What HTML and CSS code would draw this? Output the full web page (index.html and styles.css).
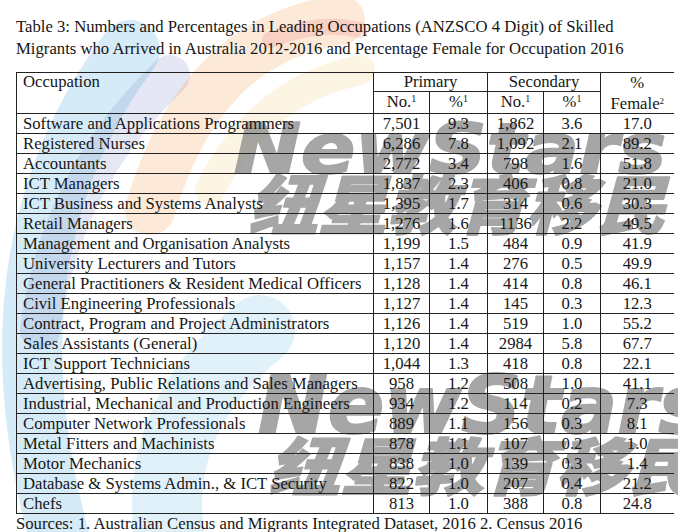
FILE: index.html
```html
<!DOCTYPE html>
<html>
<head>
<meta charset="utf-8">
<link rel="stylesheet" href="styles.css">
</head>
<body>
<div class="page">
  <svg class="backdrop" width="678" height="532" viewBox="0 0 678 532" aria-hidden="true">
    <g class="swirls" fill="none" stroke-linecap="round">
      <path class="sw-blue" d="M 130 50 Q -20 250 60 540"/>
      <path class="sw-lav" d="M 170 75 Q 60 180 40 330"/>
      <path class="sw-blue2" d="M 260 330 Q 150 420 170 540"/>
      <path class="sw-orange" d="M 150 210 Q 200 40 340 20"/>
      <path class="sw-yellow" d="M 210 190 Q 260 90 360 70"/>
      <path class="sw-red" d="M 270 40 Q 320 20 360 30"/>
    </g>
    <g class="mark">
      <text class="mark-en" x="234" y="173" font-size="70" textLength="432" lengthAdjust="spacingAndGlyphs">NewStars</text>
      <text class="mark-cn" x="248" y="229" font-size="64" textLength="418" lengthAdjust="spacingAndGlyphs">纽星教育移民</text>
      <text class="mark-en" x="258" y="433" font-size="80" textLength="450" lengthAdjust="spacingAndGlyphs">NewStars</text>
      <text class="mark-cn" x="268" y="490" font-size="62" textLength="432" lengthAdjust="spacingAndGlyphs">纽星教育移民</text>
    </g>
  </svg>
  <div class="content">
    <p class="title">Table 3: Numbers and Percentages in Leading Occupations (ANZSCO 4 Digit) of Skilled<br>Migrants who Arrived in Australia 2012-2016 and Percentage Female for Occupation 2016</p>
    <table class="occ">
      <colgroup>
        <col class="c-occ"><col class="c-n1"><col class="c-p1"><col class="c-n2"><col class="c-p2"><col class="c-f">
      </colgroup>
      <thead>
        <tr class="h1">
          <th rowspan="2" class="occ-head">Occupation</th>
          <th colspan="2">Primary</th>
          <th colspan="2">Secondary</th>
          <th rowspan="2" class="fem">%<span class="fem-l">Female<sup class="sup2">2</sup></span></th>
        </tr>
        <tr class="h2">
          <th>No.<sup>1</sup></th><th>%<sup>1</sup></th><th>No.<sup>1</sup></th><th>%<sup>1</sup></th>
        </tr>
      </thead>
      <tbody>
        <tr><td>Software and Applications Programmers</td><td>7,501</td><td>9.3</td><td>1,862</td><td>3.6</td><td>17.0</td></tr>
        <tr><td>Registered Nurses</td><td>6,286</td><td>7.8</td><td>1,092</td><td>2.1</td><td>89.2</td></tr>
        <tr><td>Accountants</td><td>2,772</td><td>3.4</td><td>798</td><td>1.6</td><td>51.8</td></tr>
        <tr><td>ICT Managers</td><td>1,837</td><td>2.3</td><td>406</td><td>0.8</td><td>21.0</td></tr>
        <tr><td>ICT Business and Systems Analysts</td><td>1,395</td><td>1.7</td><td>314</td><td>0.6</td><td>30.3</td></tr>
        <tr><td>Retail Managers</td><td>1,276</td><td>1.6</td><td>1136</td><td>2.2</td><td>49.5</td></tr>
        <tr><td>Management and Organisation Analysts</td><td>1,199</td><td>1.5</td><td>484</td><td>0.9</td><td>41.9</td></tr>
        <tr><td>University Lecturers and Tutors</td><td>1,157</td><td>1.4</td><td>276</td><td>0.5</td><td>49.9</td></tr>
        <tr><td>General Practitioners &amp; Resident Medical Officers</td><td>1,128</td><td>1.4</td><td>414</td><td>0.8</td><td>46.1</td></tr>
        <tr><td>Civil Engineering Professionals</td><td>1,127</td><td>1.4</td><td>145</td><td>0.3</td><td>12.3</td></tr>
        <tr><td>Contract, Program and Project Administrators</td><td>1,126</td><td>1.4</td><td>519</td><td>1.0</td><td>55.2</td></tr>
        <tr><td>Sales Assistants (General)</td><td>1,120</td><td>1.4</td><td>2984</td><td>5.8</td><td>67.7</td></tr>
        <tr><td>ICT Support Technicians</td><td>1,044</td><td>1.3</td><td>418</td><td>0.8</td><td>22.1</td></tr>
        <tr><td>Advertising, Public Relations and Sales Managers</td><td>958</td><td>1.2</td><td>508</td><td>1.0</td><td>41.1</td></tr>
        <tr><td>Industrial, Mechanical and Production Engineers</td><td>934</td><td>1.2</td><td>114</td><td>0.2</td><td>7.3</td></tr>
        <tr><td>Computer Network Professionals</td><td>889</td><td>1.1</td><td>156</td><td>0.3</td><td>8.1</td></tr>
        <tr><td>Metal Fitters and Machinists</td><td>878</td><td>1.1</td><td>107</td><td>0.2</td><td>1.0</td></tr>
        <tr><td>Motor Mechanics</td><td>838</td><td>1.0</td><td>139</td><td>0.3</td><td>1.4</td></tr>
        <tr><td>Database &amp; Systems Admin., &amp; ICT Security</td><td>822</td><td>1.0</td><td>207</td><td>0.4</td><td>21.2</td></tr>
        <tr><td>Chefs</td><td>813</td><td>1.0</td><td>388</td><td>0.8</td><td>24.8</td></tr>
      </tbody>
    </table>
    <p class="sources">Sources: 1. Australian Census and Migrants Integrated Dataset, 2016 2. Census 2016</p>
  </div>
</div>
</body>
</html>
```

FILE: styles.css
```css
html, body {
  margin: 0;
  padding: 0;
  background: #ffffff;
}

.page {
  position: relative;
  width: 678px;
  height: 532px;
  overflow: hidden;
  font-family: "Liberation Serif", "Times New Roman", serif;
  font-size: 16.7px;
  color: #161616;
}

.backdrop {
  position: absolute;
  left: 0;
  top: 0;
  z-index: 0;
}

.sw-blue { stroke: #3fa4dc; stroke-width: 60; opacity: 0.22; }
.sw-lav { stroke: #7d86c8; stroke-width: 40; opacity: 0.2; }
.sw-blue2 { stroke: #6ab8e4; stroke-width: 70; opacity: 0.2; }
.sw-orange { stroke: #f3a15a; stroke-width: 50; opacity: 0.24; }
.sw-yellow { stroke: #f6cf7a; stroke-width: 30; opacity: 0.2; }
.sw-red { stroke: #e24b4b; stroke-width: 16; opacity: 0.15; }

.mark {
  fill: #888888;
  stroke: #888888;
  stroke-linejoin: round;
  opacity: 0.74;
}
.mark-en {
  font-family: "DejaVu Sans", "Liberation Sans", sans-serif;
  font-weight: 700;
  font-style: italic;
  stroke-width: 2;
}
.mark-cn {
  font-family: "Noto Sans CJK SC", "Noto Sans", sans-serif;
  font-weight: 900;
  font-style: italic;
  stroke-width: 1.5;
}

.content {
  position: relative;
  z-index: 1;
  padding: 16px 0 0 16px;
}

.title {
  margin: 0;
  line-height: 22px;
}

.occ {
  margin-top: 12px;
  width: 657px;
  border-collapse: collapse;
  table-layout: fixed;
}

.c-occ { width: 357px; }
.c-n1 { width: 56px; }
.c-p1 { width: 58px; }
.c-n2 { width: 56px; }
.c-p2 { width: 57px; }
.c-f { width: 73px; }

.occ th,
.occ td {
  border: 1px solid #222;
  padding: 0;
  font-weight: normal;
  text-align: center;
  vertical-align: top;
  white-space: nowrap;
}

.occ td {
  height: 19px;
  line-height: 19px;
}

.occ th:last-child,
.occ td:last-child {
  border-right: none;
}

.occ td:first-child,
.occ .occ-head {
  text-align: left;
  padding-left: 6px;
}

.h1 th {
  height: 18px;
  line-height: 18px;
}

.h2 th {
  height: 20px;
  line-height: 20px;
}

.occ .fem {
  line-height: 19px;
}

.fem-l {
  display: block;
  margin-top: 2px;
}

sup {
  font-size: 10px;
  line-height: 0;
  vertical-align: 5px;
}

.sup2 {
  font-size: 9px;
}

.sources {
  margin: 0;
  line-height: 20px;
}
```
